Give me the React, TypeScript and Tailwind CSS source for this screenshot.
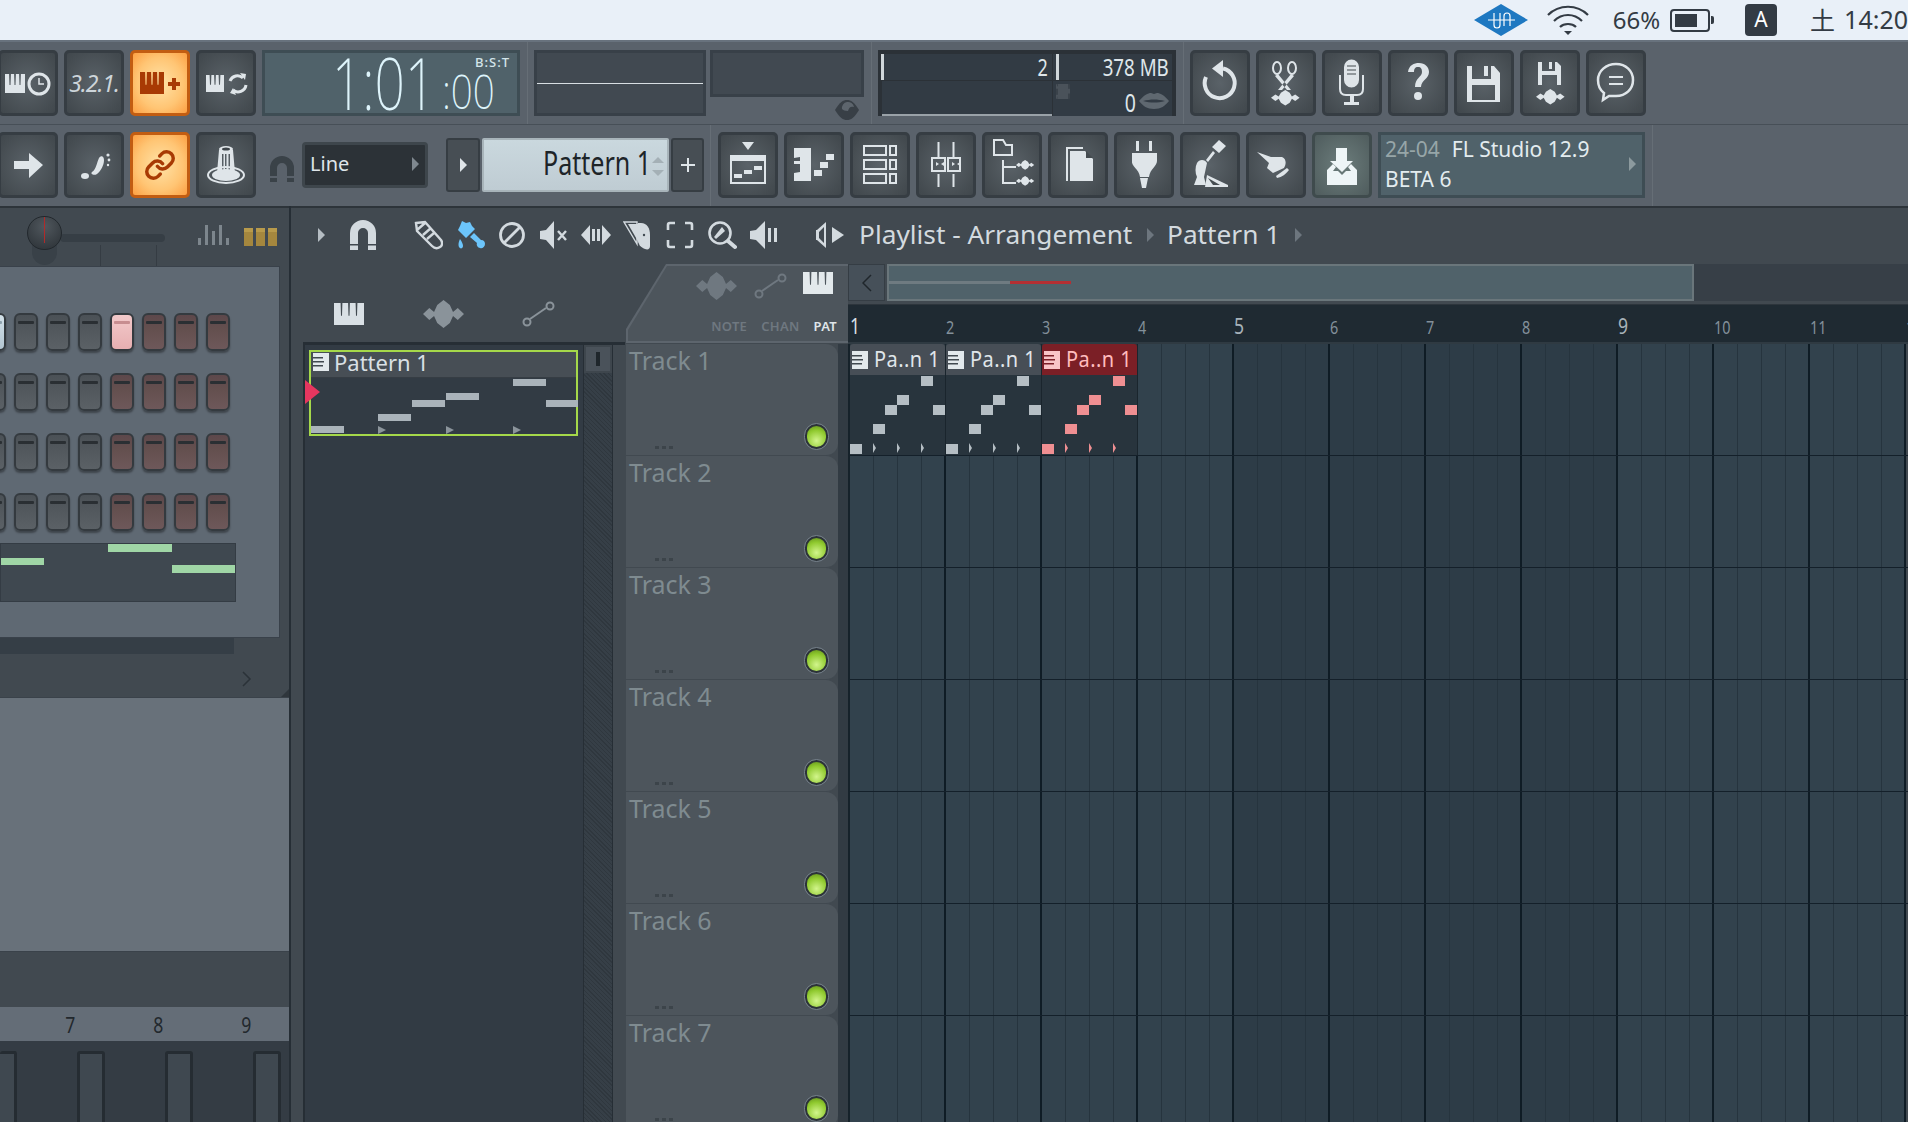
import React from 'react'
import { Link } from 'lucide-react'

const sans = "font-['Noto_Sans',sans-serif]"

function Piano({ x, y, w, h }: { x: number; y: number; w: number; h: number }) {
  const slit = (p: number) => `M${x + w * p - 0.9} ${y}h1.8l-.4 ${h * 0.58}h-1z`
  return <path fillRule="evenodd" d={`M${x} ${y}h${w}v${h}h-${w}z ${slit(0.25)} ${slit(0.5)} ${slit(0.75)}`} />
}

function Wave({ x, y, s = 1, sy }: { x: number; y: number; s?: number; sy?: number }) {
  return (
    <path
      transform={`translate(${x} ${y}) scale(${s} ${sy ?? s})`}
      d="M0 7L4 4L7 6L9 2.500L13 0L17 2.500L19 6L22 4L26 7L22 10L19 8L17 11.500L13 14L9 11.500L7 8L4 10Z"
    />
  )
}

function Btn({ children, tone = 'dark' }: { children?: React.ReactNode; tone?: 'dark' | 'orange' | 'teal' }) {
  const look =
    tone === 'orange'
      ? 'border-[#c25d12] bg-[radial-gradient(ellipse_at_center,#ffe3a8_0%,#ffc574_60%,#fda043_100%)] text-[#a83a04]'
      : tone === 'teal'
        ? 'border-[#3f4b4d] bg-[radial-gradient(ellipse_at_center,#6c7d7c_0%,#4f5c5d_100%)] text-[#eef5f7]'
        : 'border-[#363d43] bg-[radial-gradient(ellipse_at_center,#5a6268_0%,#454c51_80%,#40474c_100%)] text-[#dfe5e9]'
  return (
    <div className={`w-[60px] h-[66px] shrink-0 rounded-[5px] border-[3px] flex items-center justify-center ${look}`}>
      {children}
    </div>
  )
}

function G({ children }: { children: React.ReactNode }) {
  return (
    <svg viewBox="0 0 54 60" className="w-[54px] h-[60px]" fill="currentColor">
      {children}
    </svg>
  )
}

const line = { fill: 'none', stroke: 'currentColor', strokeWidth: 2 } as const

const leftTop = [
  <Btn key="a">
    <G>
      <Piano x={4} y={21} w={20} h={19} />
      <circle cx={38} cy={31} r={10} {...line} strokeWidth={3} />
      <path d="M38 25v6h5" {...line} strokeWidth={1.5} />
    </G>
  </Btn>,
  <Btn key="b">
    <span className={`text-[23px] italic tracking-[-1px] text-[#cdd5da] ${sans}`}>3.2.1.</span>
  </Btn>,
  <Btn key="c" tone="orange">
    <G>
      <Piano x={7} y={19} w={24} h={22} />
      <path d="M39 25h4v4h4v4h-4v4h-4v-4h-4v-4h4z" />
    </G>
  </Btn>,
  <Btn key="d">
    <G>
      <Piano x={7} y={22} w={18} h={17} />
      <path d="M31 28a8 8 0 0 1 13-3" {...line} strokeWidth={3} />
      <path d="M47 32a8 8 0 0 1-13 5" {...line} strokeWidth={3} />
      <path d="M41 20l6 1-1 6zM37 42l-6-2 3-5z" />
    </G>
  </Btn>,
]

const leftBottom = [
  <Btn key="a">
    <G>
      <path d="M13 26h15v-8l14 12-14 13v-9H13z" />
    </G>
  </Btn>,
  <Btn key="b">
    <G>
      <ellipse cx={18} cy={41} rx={4} ry={3} />
      <path d="M25 37c4-2 5-10 7-14 2-3 5-2 5 2 0 5-3 11-7 14-3 2-7 0-5-2z" />
      <circle cx={41} cy={20} r={1.6} />
      <circle cx={42} cy={25} r={1.4} />
      <circle cx={41} cy={30} r={1.2} />
    </G>
  </Btn>,
  <Btn key="c" tone="orange">
    <Link size={32} strokeWidth={2.6} />
  </Btn>,
  <Btn key="d">
    <G>
      <ellipse cx={27} cy={40} rx={18} ry={8} {...line} />
      <ellipse cx={27} cy={40} rx={14} ry={6} />
      <path fillRule="evenodd" d="M20 15h14l2 23q-9 5-18 0zM23 19h1.5v16H23zM26 19h1.5v17H26zM29.500 19H31v16h-1.500z" />
      <ellipse cx={27} cy={14} rx={7} ry={3} />
      <ellipse cx={27} cy={14} rx={4} ry={1.6} fill="#3d4449" />
    </G>
  </Btn>,
]

const rightTop = [
  <G key="undo">
    <path d="M30 15.500A15 15 0 1 1 13 24" {...line} strokeWidth={4} />
    <path d="M30 7L19 15.500 30 24z" />
  </G>,
  <G key="cut">
    <ellipse cx={18} cy={15} rx={4} ry={6} {...line} />
    <ellipse cx={33} cy={15} rx={4} ry={6} {...line} />
    <path d="M19 21l13 16h-4L16 23zM32 21L19 37h4l12-14z" />
    <Wave x={12} y={37} s={1.100} />
  </G>,
  <G key="mic">
    <path d="M19 14a7.500 7.500 0 0 1 15 0v13a7.500 7.500 0 0 1-15 0z" />
    <path d="M22 13h9M22 17h9M22 21h9" stroke="#454c51" strokeWidth={1.2} />
    <path d="M15 22v14q0 6 6 6h11q6 0 6-6V22" {...line} />
    <path d="M25 42h4v7h5v3H19v-3h6z" />
  </G>,
  <G key="help">
    <path d="M17 19c1-7 6-9 11-9 6 0 10 4 10 9 0 7-8 8-8 15h-6c0-9 7-10 7-15 0-3-1-5-4-5-3 0-4 2-4 5z" />
    <circle cx={27} cy={43} r={4} />
  </G>,
  <G key="save">
    <path fillRule="evenodd" d="M10 13h5v13h19V13h3l6 7v29H10zM27 13h4v10h-4zM15 32v15h23V32z" />
  </G>,
  <G key="saveaudio">
    <path fillRule="evenodd" d="M15 9h4v9h13V9h2l4 4v19H15zM26 9h3v7h-3zM19 22v10h15V22z" />
    <Wave x={13} y={36} s={1.100} />
  </G>,
  <G key="chat">
    <path d="M27 11c10 0 17 7 17 16s-7 16-17 16c-3 0-5 0-7 0l-6 4 1-7c-4-3-6-8-6-13 0-9 8-16 18-16z" {...line} strokeWidth={2.5} />
    <path d="M20 24h14M20 31h14" {...line} />
  </G>,
]

const rightBottom = [
  <G key="playlist">
    <path d="M21 7h12l-6 8z" />
    <path fillRule="evenodd" d="M9 20h36v29H9zM11 26v21h32V26z" />
    <path d="M13 39h8v4h-8zM23 35h8v4h-8zM33 31h8v4h-8z" />
  </G>,
  <G key="roll">
    <path d="M7 13h17v33H7v-8l6-1v-8H7v-3h6v-4l-6 1z" />
    <path d="M27 35h8v6h-8zM33 27h8v6h-8zM39 19h8v6h-8z" />
  </G>,
  <G key="rack">
    <path d="M11 11h22v9H11zM37 11h6v9h-6zM11 25h22v9H11zM37 25h6v9h-6zM11 39h22v9H11zM37 39h6v9h-6z" {...line} />
  </G>,
  <G key="mixer">
    <path d="M19.500 7v16M34.500 7v16M19.500 39v13M34.500 39v13" {...line} />
    <path d="M13 23h13v13H13zM29 23h12v13H29z" {...line} />
    <path d="M17 27l3 2-3 2zM25 27l-3 2 3 2zM33 27l3 2-3 2zM41 27l-3 2 3 2z" />
  </G>,
  <G key="browser">
    <path d="M9 5h9l3 5h6v10H9z" {...line} />
    <path d="M18 25v23h13M18 32h13" {...line} />
    <Wave x={31} y={25} s={0.7} />
    <Wave x={31} y={41} s={0.7} />
  </G>,
  <G key="pages">
    <path d="M15 12h17v2H17v32h-2z" />
    <path d="M19 16h15l8 8v22H19z" />
    <path d="M35 16l7 7h-7z" fill="#454c51" />
  </G>,
  <G key="plug">
    <path d="M19 6h3v10h-3zM32 6h3v10h-3z" />
    <path d="M15 18h25v8c0 5-7 8-8 16h-9c-1-8-9-11-8-16zM23 43h8l-2 10h-4z" />
  </G>,
  <G key="pedal">
    <path d="M29 12l7-7 7 6-7 7zM32 18l-7 9-2-2 7-9z" />
    <path d="M14 28c2-4 8-4 10 0l-3 14 2 8H11l3-8c-2-4-2-10 0-14z" />
    <path d="M24 40l21 10v2H22z" />
    <path d="M25 43l5 7h7z" fill="#454c51" />
  </G>,
  <G key="hand">
    <path d="M8 17l14 5h11c5 2 4 8 2 11l-11 5-6-5 2-5z" />
    <path d="M27 41l11-8 2 2c-3 4-7 7-12 8z" />
  </G>,
  <G key="inbox">
    <path d="M21 13h11v13h6L27 37 15 26h6z" />
    <path d="M12 35l6-6 3 3-3 4h5l4 4 4-4h5l-3-4 3-3 6 6v15H12z" />
  </G>,
]

function IconSvg({ w = 30, h = 30, children, className = '' }: { w?: number; h?: number; children: React.ReactNode; className?: string }) {
  return (
    <svg width={w} height={h} viewBox={`0 0 ${w} ${h}`} fill="currentColor" className={className}>
      {children}
    </svg>
  )
}

const toolIcons = [
  <IconSvg key="pencil">
    <path d="M3 3l9-1 16 18c2 3 1 6-1 7-3 2-6 1-8-1L4 11zM4 10l8-7M10 15l8-7M14 19l7-6" {...line} strokeWidth={2.4} />
  </IconSvg>,
  <IconSvg key="brush" className="text-[#6cc5fb]">
    <path d="M7 1l4 2 4-1 2 4 3 3-9 9-8-8 2-4zM15 17l4-4 7 7c3 0 4 2 4 4 0 3-3 5-5 4-2 0-4-3-3-5zM5 19c2 3 3 5 3 7s-2 3-3 2c-2-1-2-5 0-9z" />
  </IconSvg>,
  <IconSvg key="no">
    <circle cx={15} cy={15} r={11.500} {...line} strokeWidth={2.8} />
    <path d="M7 23L23 7" {...line} strokeWidth={2.8} />
  </IconSvg>,
  <IconSvg key="mute">
    <path d="M1 11l6-1 8-9v28l-8-9-6-1z" />
    <path d="M19 11l8 9M27 11l-8 9" {...line} strokeWidth={2.4} />
  </IconSvg>,
  <IconSvg key="slip">
    <path d="M0 15l9-10v20zM11 9h3v12h-3zM16 9h3v12h-3zM30 15l-9-10v20z" />
  </IconSvg>,
  <IconSvg key="slice">
    <path d="M1 2h13v22z" {...line} strokeWidth={1.4} />
    <path d="M5 4l11 19V4z" />
    <path d="M15 3h3c6 0 9 5 9 12v11c0 3-2 4-5 3-5-2-7-5-7-10z" />
    <circle cx={21} cy={15} r={1.2} fill="#414950" />
  </IconSvg>,
  <IconSvg key="bracket">
    <path d="M10 3H5Q3 3 3 5v5M20 3h5q2 0 2 2v5M10 27H5q-2 0-2-2v-5M20 27h5q2 0 2-2v-5" {...line} strokeWidth={2.6} />
  </IconSvg>,
  <IconSvg key="glass">
    <circle cx={13} cy={13} r={10.500} {...line} strokeWidth={2.6} />
    <path d="M7 17L15 7l3 4-9 8z" />
    <path d="M21 21l7 6" {...line} strokeWidth={4} strokeLinecap="round" />
  </IconSvg>,
  <IconSvg key="speaker">
    <path d="M1 11l6-1 9-9v28l-9-9-6-1z" />
    <path d="M19 8h3v14h-3zM25 8h3v14h-3z" />
  </IconSvg>,
]

function Bubble({ children }: { children: React.ReactNode }) {
  return <div className="w-[42px] flex justify-center text-[#d3dadf]">{children}</div>
}

function Caret({ className = 'text-[#6d767e]' }: { className?: string }) {
  return <div className={`w-0 h-0 border-y-[7px] border-y-transparent border-l-[7px] border-l-current ${className}`} />
}

function MenuBar() {
  return (
    <div className={`h-[42px] shrink-0 bg-[#e9f0f8] border-b-2 border-[#68727d] flex items-center justify-end overflow-hidden text-[#333b44] ${sans}`}>
      <svg width={54} height={32} viewBox="0 0 54 32" className="mr-[19px]">
        <path d="M27 0l27 16-27 16L0 16z" fill="#1e78c1" />
        <path d="M20 9v12a3 3 0 0 0 6 0V9M30 22V12a3 3 0 0 1 6 0v10M14 16h27" fill="none" stroke="#fff" strokeWidth={1.2} />
      </svg>
      <svg width={42} height={30} viewBox="0 0 42 30" fill="none" stroke="#333b44" strokeWidth={2.2} className="mr-[24px]">
        <path d="M1 10c11-11 29-11 40 0M7 16c8-8 20-8 28 0M13 22c4-4 12-4 16 0" />
        <path d="M21 30l-4-4h8z" fill="#333b44" stroke="none" />
      </svg>
      <span className="text-[24px] mr-[10px]">66%</span>
      <div className="w-[40px] h-[23px] rounded-[4px] border-2 border-[#333b44] p-[3px] mr-[1px]">
        <div className="w-[22px] h-full bg-[#333b44]" />
      </div>
      <div className="w-[3px] h-[8px] bg-[#333b44] rounded-r-[2px] mr-[31px]" />
      <div className="w-[32px] h-[32px] rounded-[4px] bg-[#333b44] text-white flex items-center justify-center text-[21px] mr-[33px]">A</div>
      <span className="text-[25px] mr-[9px] font-['Noto_Sans_CJK_SC',sans-serif]">土</span>
      <span className="text-[25px] shrink-0 whitespace-nowrap">14:20</span>
    </div>
  )
}

function Vr() {
  return <div className="w-[1px] self-stretch bg-[#474f57] border-r border-[#666e76]" />
}

function ToolbarTop() {
  return (
    <div className="h-[83px] shrink-0 flex border-b border-[#474f57]">
      <div className="flex gap-[6px] ml-[-2px] pt-[8px]">{leftTop}</div>
      <div className={`ml-[6px] mt-[8px] w-[258px] h-[66px] border-[3px] border-[#3e4d54] bg-[#50626a] relative text-[#def4fb] ${sans}`}>
        <span className="absolute left-[67px] top-0 text-[72px] leading-[58px] font-extralight scale-x-[0.74] origin-left">1:01</span>
        <span className="absolute left-[177px] top-[20px] text-[47px] leading-[36px] font-extralight scale-x-[0.82] origin-left">:00</span>
        <span className="absolute left-[210px] top-[2px] text-[13px] leading-[15px] tracking-[1px] font-medium text-[#d3e5ea]">B:S:T</span>
      </div>
      <div className="w-[7px]" />
      <Vr />
      <div className="ml-[6px] mt-[8px] w-[172px] h-[66px] border-[3px] border-[#384048] bg-[#414951] flex items-center">
        <div className="w-full h-[1px] bg-[#d8dee2]" />
      </div>
      <div className="ml-[4px] mt-[8px] w-[154px] flex flex-col">
        <div className="h-[47px] border-[3px] border-[#384048] bg-[#414951]" />
        <div className="flex justify-end pr-[5px] pt-[3px]">
          <svg width={24} height={20} viewBox="0 0 24 20">
            <path d="M0 10C5 2 8 0 12 0s7 2 12 10c-5 8-8 10-12 10S5 18 0 10z" fill="#383f46" />
            <path d="M7 9a6 6 0 0 1 12-2c-3-1-5 0-6 4-3 0-5-1-6-2z" fill="#5d656d" />
          </svg>
        </div>
      </div>
      <div className="w-[7px]" />
      <Vr />
      <div className={`ml-[6px] mt-[8px] w-[298px] h-[66px] bg-[#2b3137] p-[4px] pb-0 grid grid-cols-[170px_1fr] grid-rows-[26px_1fr] gap-[1px] text-[#dfe6ea] ${sans}`}>
        <div className="bg-[#323b44] relative">
          <div className="absolute left-[-1px] top-0 w-[3px] h-full bg-[#cfd6da]" />
          <span className="absolute right-[4px] top-[-3px] text-[24px] leading-[32px] scale-x-[0.75] origin-right">2</span>
        </div>
        <div className="bg-[#323b44] relative">
          <div className="absolute left-[3px] top-0 w-[3px] h-full bg-[#cfd6da]" />
          <span className="absolute right-[3px] top-[-3px] text-[24px] leading-[32px] whitespace-nowrap scale-x-[0.78] origin-right">378 MB</span>
        </div>
        <div className="bg-[#323b44] border-b-2 border-[#9aa2a8]" />
        <div className="bg-[#323b44] relative">
          <div className="absolute left-[3px] top-[3px] w-[14px] h-[15px] bg-[#4a525a] rounded-[1px] border-x-2 border-dashed border-[#3a424a]" />
          <span className="absolute right-[36px] top-[5px] text-[26px] leading-[32px] scale-x-[0.75] origin-right">0</span>
          <svg width={30} height={16} viewBox="0 0 30 16" className="absolute right-[3px] top-[12px]">
            <path d="M0 8C5 2 9 0 12 0c1 0 2 1 3 1s2-1 3-1c3 0 7 2 12 8-4 5-8 8-15 8S4 13 0 8z" fill="#5f6870" />
            <path d="M4 8c8-2 14-2 22 0-8 2-14 2-22 0z" fill="#323b44" />
          </svg>
        </div>
      </div>
      <div className="w-[7px]" />
      <Vr />
      <div className="flex gap-[6px] ml-[6px] pt-[8px]">
        {rightTop.map((g, i) => (
          <Btn key={i}>{g}</Btn>
        ))}
      </div>
    </div>
  )
}

function ToolbarBottom() {
  return (
    <div className="h-[81px] shrink-0 flex">
      <div className="flex gap-[6px] ml-[-2px] pt-[7px]">{leftBottom}</div>
      <div className="ml-[14px] w-[24px] pt-[31px] text-[#3a4248]">
        <svg width={24} height={26} viewBox="0 0 24 26">
          <path d="M0 12a12 12 0 0 1 24 0v14h-7V12a5 5 0 0 0-10 0v14H0z" fill="currentColor" />
          <path d="M0 20h7v2H0zM17 20h7v2h-7z" fill="#5a626b" />
        </svg>
      </div>
      <div className={`ml-[8px] mt-[17px] w-[126px] h-[46px] rounded-[4px] border-[3px] border-[#3e464c] bg-[#2c3237] flex items-center justify-between pl-[5px] pr-[6px] pb-[3px] text-[20px] text-[#dfe5e9] ${sans}`}>
        Line
        <Caret className="text-[#7f888f]" />
      </div>
      <div className="ml-[18px] mt-[13px] w-[34px] h-[54px] rounded-[3px] border-[2px] border-[#363d43] bg-[#474e54] flex items-center justify-center">
        <Caret className="text-[#dfe5e9]" />
      </div>
      <div className={`ml-[2px] mt-[13px] w-[187px] h-[54px] rounded-[2px] border-[2px] border-[#a8b4ba] bg-[linear-gradient(#cad8de,#bfccd3)] relative text-[#1d2428] ${sans}`}>
        <span className="absolute left-[59px] top-0 text-[33px] leading-[46px] whitespace-nowrap scale-x-[0.76] origin-left">Pattern 1</span>
        <div className="absolute right-[3px] top-[17px] w-0 h-0 border-x-[6px] border-x-transparent border-b-[6px] border-b-[#a4b0b6]" />
        <div className="absolute right-[3px] top-[30px] w-0 h-0 border-x-[6px] border-x-transparent border-t-[6px] border-t-[#a4b0b6]" />
      </div>
      <div className="ml-[2px] mt-[13px] w-[33px] h-[54px] rounded-[3px] border-[2px] border-[#363d43] bg-[#474e54] flex items-center justify-center text-[#dfe5e9]">
        <svg width={14} height={14} viewBox="0 0 14 14">
          <path d="M6 0h2v6h6v2H8v6H6V8H0V6h6z" fill="currentColor" />
        </svg>
      </div>
      <div className="w-[6px]" />
      <Vr />
      <div className="flex gap-[6px] ml-[7px] pt-[7px]">
        {rightBottom.map((g, i) => (
          <Btn key={i} tone={i === 9 ? 'teal' : 'dark'}>
            {g}
          </Btn>
        ))}
      </div>
      <div className={`ml-[6px] mt-[7px] w-[267px] h-[66px] border-[3px] border-[#3e4d54] bg-[#50626a] flex items-center pl-[4px] pr-[6px] pb-[3px] justify-between text-[#e3ecef] ${sans}`}>
        <div className="text-[21px] leading-[30px] whitespace-nowrap">
          <div>
            <span className="text-[#97a6a8] mr-[12px]">24-04</span>FL Studio 12.9
          </div>
          <div>BETA 6</div>
        </div>
        <Caret className="text-[#8c9a9e]" />
      </div>
      <div className="w-[7px]" />
      <Vr />
    </div>
  )
}

function StepBtn({ tone }: { tone: 'gray' | 'brown' | 'pink' | 'lit' }) {
  const look = {
    gray: 'bg-[linear-gradient(#4b5156,#52585d_45%,#5b6166)]',
    brown: 'bg-[linear-gradient(#5d484b,#64504f_45%,#6e585a)]',
    pink: 'bg-[linear-gradient(#f2c9ca,#e7afb1)]',
    lit: 'bg-[linear-gradient(#d2e0e8,#b3c6d2)]',
  }[tone]
  return (
    <div className={`w-[24px] h-[38px] shrink-0 rounded-[6px] border-2 border-[#343a3f] pt-[6px] px-[2px] shadow-[0_2px_2px_rgba(0,0,0,0.35)] ${look}`}>
      <div className={`h-[3px] rounded-[1px] ${tone === 'pink' ? 'bg-[#c78d90]' : tone === 'lit' ? 'bg-[#8fa3af]' : 'bg-[#2a2f33]'}`} />
    </div>
  )
}

const stepRows: ('gray' | 'brown' | 'pink' | 'lit')[][] = [
  ['lit', 'gray', 'gray', 'gray', 'pink', 'brown', 'brown', 'brown'],
  ['gray', 'gray', 'gray', 'gray', 'brown', 'brown', 'brown', 'brown'],
  ['gray', 'gray', 'gray', 'gray', 'brown', 'brown', 'brown', 'brown'],
  ['gray', 'gray', 'gray', 'gray', 'brown', 'brown', 'brown', 'brown'],
]

function LeftPanel() {
  return (
    <div className="w-[291px] shrink-0 h-full border-r-2 border-[#262e35] bg-[#414950] flex flex-col">
      <div className="h-[60px] shrink-0 relative border-t-2 border-[#2d343a]">
        <div className="absolute left-[60px] top-[26px] w-[105px] h-[8px] rounded-full bg-[#363e45]" />
        <div className="absolute left-[100px] top-[37px] w-[1px] h-[21px] bg-[#353c43]" />
        <div className="absolute left-[156px] top-[37px] w-[1px] h-[21px] bg-[#353c43]" />
        <div className="absolute left-[32px] top-[30px] w-[25px] h-[27px] rounded-b-full bg-[#394148]" />
        <div className="absolute left-[27px] top-[8px] w-[35px] h-[34px] rounded-full border border-[#22282d] bg-[radial-gradient(circle_at_50%_30%,#50575d,#2a3035)] flex justify-center">
          <div className="w-[1px] h-[26px] bg-[#b02a2a]" />
        </div>
        <div className="absolute left-[198px] top-[17px] flex items-end gap-[4px] h-[20px]">
          {[7, 20, 14, 20, 7].map((h, i) => (
            <div key={i} className="w-[3px] bg-[#7d868d]" style={{ height: h }} />
          ))}
        </div>
        <div className="absolute left-[244px] top-[20px] flex gap-[3px]">
          {[0, 1, 2].map((i) => (
            <div key={i} className="w-[9px] h-[18px] bg-[linear-gradient(#b89a4b_0,#b89a4b_4px,#a5873e_4px)]" />
          ))}
        </div>
      </div>
      <div className="h-[372px] shrink-0 w-[280px] bg-[#5f6973] border-t border-r border-b border-[#39414a] pt-[46px] flex flex-col">
        <div className="flex flex-col gap-[22px]">
          {stepRows.map((row, r) => (
            <div key={r} className="flex gap-[8px] ml-[-18px]">
              {row.map((t, i) => (
                <StepBtn key={i} tone={t} />
              ))}
            </div>
          ))}
        </div>
        <div className="mt-[12px] w-[236px] h-[59px] bg-[#3f4850] border border-[#343c44] relative">
          <div className="absolute left-0 top-[14px] w-[43px] h-[7px] bg-[#a0d6a6]" />
          <div className="absolute left-[107px] top-0 w-[64px] h-[8px] bg-[#a0d6a6]" />
          <div className="absolute left-[171px] top-[21px] w-[63px] h-[8px] bg-[#a0d6a6]" />
        </div>
      </div>
      <div className="w-[234px] h-[16px] shrink-0 bg-[#353e46]" />
      <div className="h-[43px] shrink-0 flex relative">
        <svg width={10} height={16} viewBox="0 0 10 16" className="absolute left-[242px] top-[17px]">
          <path d="M1 1l7 7-7 7" fill="none" stroke="#2b3238" strokeWidth={1.500} />
        </svg>
        <div className="absolute right-0 bottom-0 w-0 h-0 border-l-[8px] border-l-transparent border-b-[8px] border-b-[#2f363c]" />
      </div>
      <div className="h-[255px] shrink-0 bg-[#68717a] border-y border-[#3a424a]" />
      <div className="h-[55px] shrink-0" />
      <div className={`h-[34px] shrink-0 bg-[#646d77] relative text-[#22282d] text-[22px] leading-[34px] ${sans}`}>
        <span className="absolute left-[64px] scale-x-[0.8]">7</span>
        <span className="absolute left-[152px] scale-x-[0.8]">8</span>
        <span className="absolute left-[240px] scale-x-[0.8]">9</span>
      </div>
      <div className="flex-1 bg-[#343c44] flex pt-[10px] pl-0 overflow-hidden">
        {['w-[17px] border-l-0', 'w-[28px] ml-[60px]', 'w-[28px] ml-[60px]', 'w-[28px] ml-[60px]'].map((c, i) => (
          <div key={i} className={`${c} h-[90px] rounded-t-[3px] border-[3px] border-[#252c32] bg-[#3f4850]`} />
        ))}
      </div>
    </div>
  )
}

function PatGlyph({ tone = 'light' }: { tone?: 'light' | 'pink' }) {
  return (
    <svg width={16} height={18} viewBox="0 0 16 18" className="shrink-0">
      <path d="M0 0h16v18H0z" fill={tone === 'pink' ? '#f9c4c6' : '#e3e9ec'} />
      <path d="M0 4h10v1.500H0zM0 8h11v1.500H0zM0 12h10v1.500H0z" fill={tone === 'pink' ? '#7b1f26' : '#41494f'} />
    </svg>
  )
}

function BrowserColumn() {
  const bars = [
    [0, 74, 33, 7],
    [67, 62, 33, 7],
    [101, 48, 33, 7],
    [135, 41, 33, 7],
    [202, 27, 33, 7],
    [235, 48, 32, 7],
  ]
  return (
    <div className="w-[334px] shrink-0 h-full flex flex-col pl-[12px]">
      <div className="h-[79px] shrink-0 relative">
        <div className="absolute left-[31px] top-[40px] text-[#d9e0e5]">
          <IconSvg w={30} h={22}>
            <Piano x={0} y={0} w={30} h={22} />
          </IconSvg>
        </div>
        <div className="absolute left-[120px] top-[37px] text-[#8a939a]">
          <IconSvg w={41} h={28}>
            <Wave x={0} y={0} s={1.580} sy={2} />
          </IconSvg>
        </div>
        <div className="absolute left-[219px] top-[38px] text-[#8a939a]">
          <IconSvg w={33} h={26}>
            <circle cx={5} cy={21} r={3.500} {...line} />
            <circle cx={28} cy={5} r={3.500} {...line} />
            <path d="M8 18l16-11" {...line} />
          </IconSvg>
        </div>
      </div>
      <div className="flex-1 flex border-t-[3px] border-l-2 border-[#262e35]">
        <div className="w-[278px] shrink-0 bg-[#323b44] pt-[5px] pl-[4px] pr-[5px]">
          <div className={`relative h-[86px] border-2 border-[#a5d84a] ${sans}`}>
            <div className="h-[26px] bg-[#474e55] border-b border-[#363d44] flex items-center gap-[5px] pl-[2px] pb-[5px] text-[22px] text-[#d9e0e5]">
              <PatGlyph />
              <span className="whitespace-nowrap leading-[26px]">Pattern 1</span>
            </div>
            {bars.map(([x, y, w, h], i) => (
              <div key={i} className="absolute bg-[#aab3ba]" style={{ left: x, top: y, width: w, height: h }} />
            ))}
            {[67, 135, 202].map((x) => (
              <div key={x} className="absolute top-[74px] w-0 h-0 border-y-[4px] border-y-transparent border-l-[8px] border-l-[#8b949b]" style={{ left: x }} />
            ))}
            <div className="absolute left-[-6px] top-[28px] w-0 h-0 border-y-[12px] border-y-transparent border-l-[15px] border-l-[#e6365f]" />
          </div>
        </div>
        <div className="w-[30px] shrink-0 border-x border-[#262e35] bg-[repeating-linear-gradient(45deg,#2f373e_0px,#2f373e_1px,#363f47_1px,#363f47_3px)]">
          <div className="h-[28px] bg-[#4a525a] border-2 border-[#3e464d] flex items-center justify-center">
            <div className="w-[4px] h-[14px] bg-[#1f262b]" />
          </div>
        </div>
      </div>
    </div>
  )
}

const tracks = ['Track 1', 'Track 2', 'Track 3', 'Track 4', 'Track 5', 'Track 6', 'Track 7']

function TrackHeader({ name }: { name: string }) {
  return (
    <div className="h-[112px] shrink-0 flex">
      <div className={`w-[212px] ml-[1px] rounded-tr-[12px] rounded-br-[12px] bg-[#4d555c] border-b border-[#414950] relative ${sans}`}>
        <span className="absolute left-[3px] top-0 text-[25px] leading-[32px] text-[#7f8b90] whitespace-nowrap">{name}</span>
        <span className="absolute left-[29px] bottom-[6px] flex gap-[3px]">
          <i className="w-[4px] h-[3px] bg-[#3c444a]" />
          <i className="w-[4px] h-[3px] bg-[#3c444a]" />
          <i className="w-[4px] h-[3px] bg-[#3c444a]" />
        </span>
        <span className="absolute left-[179px] top-[80px] w-[23px] h-[25px] rounded-full border-2 border-[#2c3338] outline outline-1 outline-[#75808a] bg-[radial-gradient(circle_at_50%_70%,#d2f58c,#8fc92e_60%,#5d8a1a)]" />
      </div>
      <div className="w-[10px] shrink-0 bg-[#323b43]" />
    </div>
  )
}

function Clip({ tone }: { tone: 'gray' | 'red' }) {
  const note = tone === 'red' ? 'bg-[#ef8f92]' : 'bg-[#b5bec4]'
  const arrow = tone === 'red' ? 'border-l-[#ef8f92]' : 'border-l-[#b5bec4]'
  const notes = [
    [0, 100],
    [23, 80],
    [35, 61],
    [47, 51],
    [71, 32],
    [83, 61],
  ]
  return (
    <div className="w-[96px] h-[111px] shrink-0 relative bg-[#28343d] border-r border-[#1a252d]">
      <div
        className={`h-[31px] rounded-t-[3px] flex items-center gap-[6px] pl-[2px] text-[21px] whitespace-nowrap ${sans} ${
          tone === 'red' ? 'bg-[#7b1f26] text-[#ffbcbe]' : 'bg-[#474e56] text-[#e0e6ea]'
        }`}
      >
        <PatGlyph tone={tone === 'red' ? 'pink' : 'light'} />
        <span className="scale-x-[0.95] origin-left tracking-[0.5px]">Pa..n 1</span>
      </div>
      {notes.map(([x, y]) => (
        <div key={x} className={`absolute w-[12px] h-[10px] ${note}`} style={{ left: x, top: y }} />
      ))}
      {[23, 47, 71].map((x) => (
        <div key={x} className={`absolute top-[99px] w-0 h-0 border-y-[5px] border-y-transparent border-l-[3px] ${arrow}`} style={{ left: x }} />
      ))}
    </div>
  )
}

const beats = Array.from({ length: 44 }, (_, i) => i)
const rulerMarks = [1, 2, 3, 4, 5, 6, 7, 8, 9, 10, 11, 12]

function Playlist() {
  return (
    <div className="flex-1 min-w-0 h-full flex overflow-hidden">
      <div className="w-[223px] shrink-0 flex flex-col">
        <div className="h-[81px] shrink-0 pt-[1px] bg-transparent">
          <div className={`h-[79px] ml-[1px] bg-[#5d656d] pt-[2px] pl-[2px] [clip-path:polygon(40px_0,100%_0,100%_100%,0_100%,0_65px)]`}>
            <div className={`h-[75px] bg-[#4d555c] relative [clip-path:polygon(39px_0,100%_0,100%_100%,0_100%,0_64px)] ${sans}`}>
              <div className="absolute left-[68px] top-[6px] text-[#6f7880]">
                <IconSvg w={41} h={28}>
                  <Wave x={0} y={0} s={1.580} sy={2} />
                </IconSvg>
              </div>
              <div className="absolute left-[126px] top-[7px] text-[#6f7880]">
                <IconSvg w={33} h={26}>
                  <circle cx={5} cy={21} r={3.500} {...line} />
                  <circle cx={28} cy={5} r={3.500} {...line} />
                  <path d="M8 18l16-11" {...line} />
                </IconSvg>
              </div>
              <div className="absolute left-[175px] top-[6px] text-[#e3e9ec]">
                <IconSvg w={30} h={22}>
                  <Piano x={0} y={0} w={30} h={22} />
                </IconSvg>
              </div>
              <div className="absolute right-[11px] bottom-[7px] flex gap-[14px] text-[13px] leading-[16px] font-semibold tracking-[0.3px] text-[#6f7880]">
                <span>NOTE</span>
                <span>CHAN</span>
                <span className="text-[#dfe5e9]">PAT</span>
              </div>
            </div>
          </div>
        </div>
        {tracks.map((t) => (
          <TrackHeader key={t} name={t} />
        ))}
      </div>
      <div className="flex-1 min-w-0 flex flex-col">
        <div className="h-[42px] shrink-0 flex pt-[1px] pb-[3px] border-b border-[#2d353c]">
          <div className="w-[37px] shrink-0 bg-[#465059] border border-[#353d44] flex items-center justify-center">
            <svg width={10} height={18} viewBox="0 0 10 18">
              <path d="M9 1L1 9l8 8" fill="none" stroke="#1f262b" strokeWidth={1.500} />
            </svg>
          </div>
          <div className="ml-[2px] w-[807px] shrink-0 bg-[#50626a] border-2 border-[#6a767b] flex items-center">
            <div className="w-[121px] h-[3px] bg-[#6f7b81]" />
            <div className="w-[61px] h-[3px] bg-[#b52f33]" />
          </div>
          <div className="flex-1 bg-[#373f47]" />
        </div>
        <div className={`h-[39px] shrink-0 bg-[#1f2a32] border-b-2 border-[#2f3a42] flex items-end pb-[3px] ${sans}`}>
          {rulerMarks.map((n) => {
            const big = n % 4 === 1
            return (
              <div key={n} className={`w-[96px] shrink-0 pl-[2px] ${big ? 'text-[22px] leading-[28px] text-[#a7b2b9]' : 'text-[18px] leading-[24px] text-[#83909a]'}`}>
                <span className={`inline-block scale-x-[0.8] origin-left ${n === 1 ? 'text-[#d7dfe4]' : ''}`}>{n}</span>
              </div>
            )
          })}
        </div>
        <div className="flex-1 relative overflow-hidden border-l-2 border-[#16222a]">
          <div className="absolute inset-0 flex">
            {beats.map((i) => {
              const block = Math.floor(i / 16) % 2 === 1
              const bar = i % 4 === 3
              return (
                <div
                  key={i}
                  className={`w-[24px] shrink-0 h-full border-r ${block ? 'bg-[#2d3c47]' : 'bg-[#32424d]'} ${bar ? 'border-r-2 border-[#0f1c25]' : 'border-[#26343e]'}`}
                />
              )
            })}
          </div>
          <div className="relative flex flex-col">
            {tracks.map((t) => (
              <div key={t} className="h-[112px] shrink-0 border-b border-[#14202a]">
                {t === 'Track 1' && (
                  <div className="flex">
                    <Clip tone="gray" />
                    <Clip tone="gray" />
                    <Clip tone="red" />
                  </div>
                )}
              </div>
            ))}
          </div>
        </div>
      </div>
    </div>
  )
}

export default function App() {
  return (
    <div className="w-[1908px] h-[1122px] overflow-hidden bg-[#414950] flex flex-col">
      <MenuBar />
      <div className="bg-[#5a626b] shrink-0 h-[164px] flex flex-col">
        <ToolbarTop />
        <ToolbarBottom />
      </div>
      <div className="flex-1 min-h-0 flex">
        <LeftPanel />
        <div className="flex-1 min-w-0 flex flex-col border-t-2 border-[#2d343a]">
          <div className={`h-[55px] shrink-0 pb-[1px] flex items-center text-[#d3dadf] ${sans}`}>
            <div className="ml-[27px]">
              <Caret className="text-[#b5bdc3]" />
            </div>
            <div className="ml-[25px]">
              <IconSvg w={26} h={30}>
                <path d="M0 13a13 13 0 0 1 26 0v17h-8V13a5 5 0 0 0-10 0v17H0z" />
                <path d="M0 24h8v1.500H0zM18 24h8v1.500h-8z" fill="#414950" />
              </IconSvg>
            </div>
            <div className="ml-[31px] flex">
              {toolIcons.map((ic, i) => (
                <Bubble key={i}>{ic}</Bubble>
              ))}
            </div>
            <div className="ml-[30px]">
              <IconSvg w={30} h={32}>
                <path d="M11 3v26l-9-8H1V11h1zM9 8l-5 5v6l5 5z" fillRule="evenodd" />
                <path d="M17 8l12 8-12 8z" />
              </IconSvg>
            </div>
            <span className="ml-[14px] text-[25px] whitespace-nowrap w-[274px] inline-block scale-x-[1.05] origin-left">Playlist - Arrangement</span>
            <div className="ml-[14px]">
              <Caret />
            </div>
            <span className="ml-[13px] text-[25px] whitespace-nowrap w-[112px] inline-block scale-x-[1.05] origin-left">Pattern 1</span>
            <div className="ml-[16px]">
              <Caret />
            </div>
          </div>
          <div className="flex-1 min-h-0 flex">
            <BrowserColumn />
            <Playlist />
          </div>
        </div>
      </div>
    </div>
  )
}
